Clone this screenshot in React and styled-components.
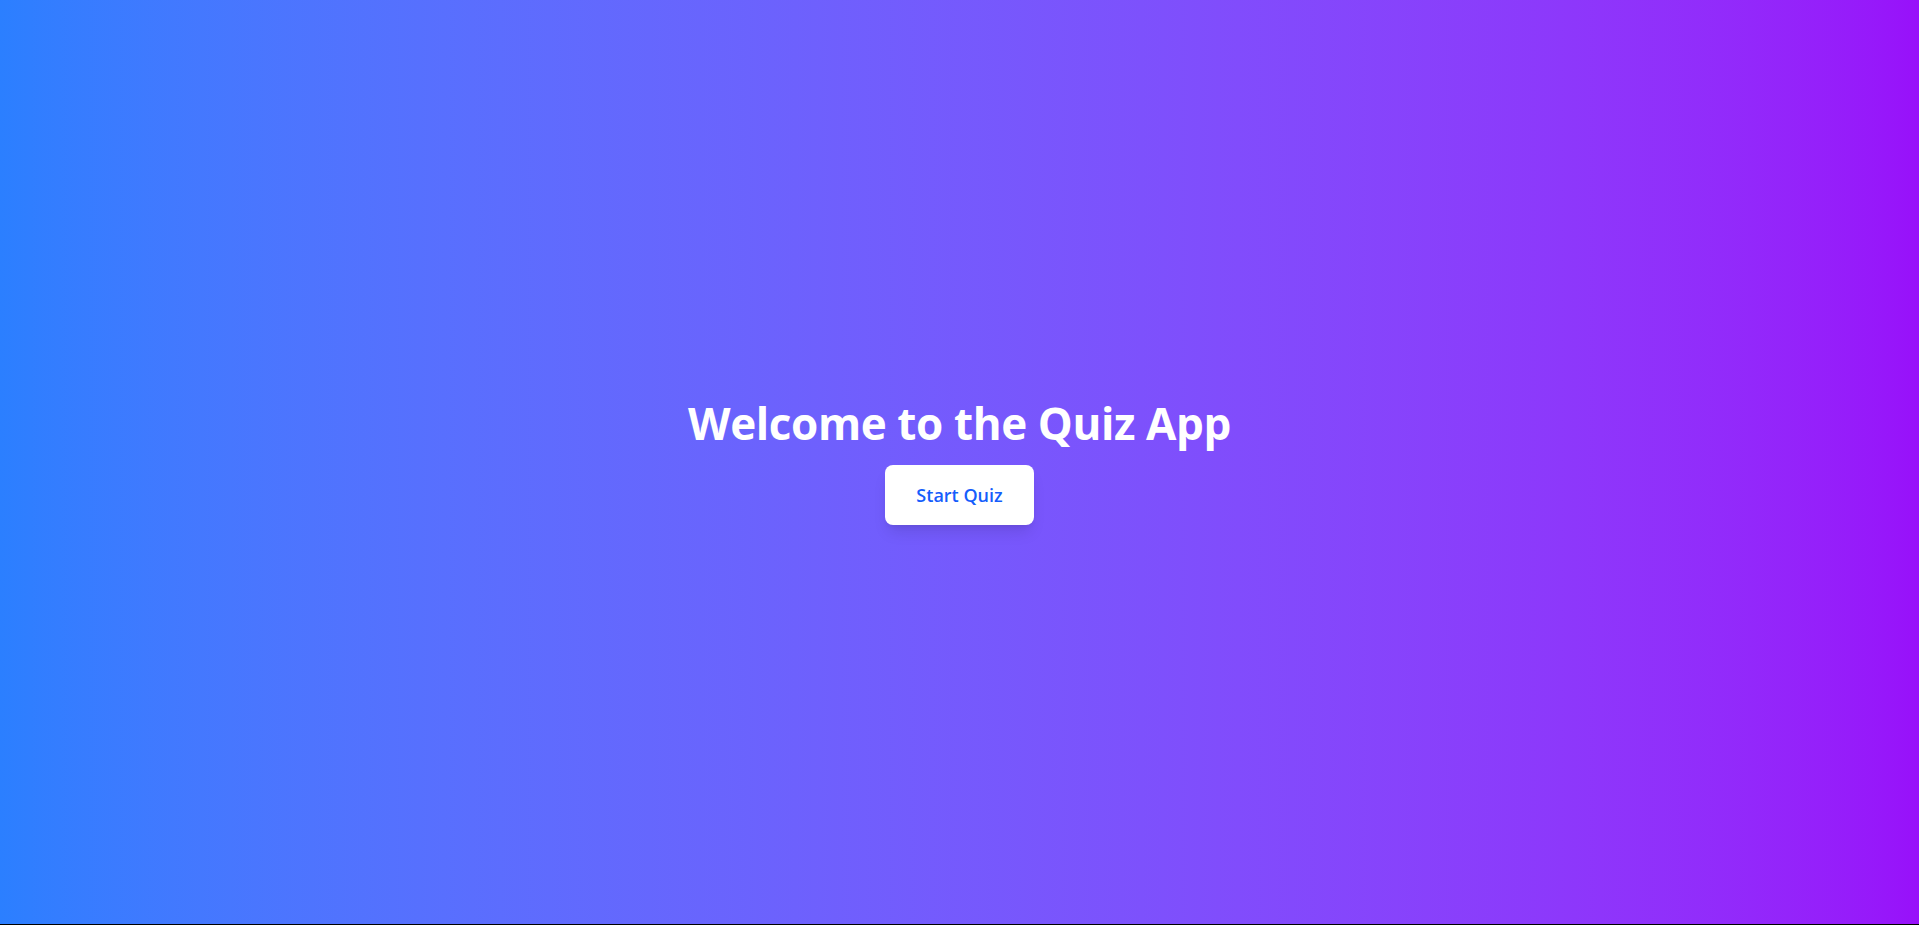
import React from 'react';
import styled, { createGlobalStyle } from 'styled-components';

const GlobalStyle = createGlobalStyle`
  html, body {
    margin: 0;
    padding: 0;
    background: #000;
  }
  body {
    font-family: "Open Sans", "Noto Sans", "Liberation Sans", sans-serif;
  }
`;

const Screen = styled.div`
  height: 924px;
  width: 100%;
  display: flex;
  flex-direction: column;
  align-items: center;
  justify-content: center;
  background: linear-gradient(to right in oklab, #2b7fff, #9810fa);
`;

const Title = styled.h1`
  margin: 0 0 18px;
  font-size: 44px;
  line-height: 48px;
  font-weight: 700;
  color: #fff;
  letter-spacing: -0.4px;
`;

const StartButton = styled.button`
  height: 60px;
  padding: 0 31px;
  border: none;
  border-radius: 8px;
  background: #fff;
  color: #155dfc;
  font-family: inherit;
  font-size: 18px;
  font-weight: 600;
  cursor: pointer;
  box-shadow: 0 10px 15px -3px rgba(0, 0, 0, 0.1), 0 4px 6px -4px rgba(0, 0, 0, 0.1);
`;

export default function App() {
  return (
    <>
      <GlobalStyle />
      <Screen>
        <Title>Welcome to the Quiz App</Title>
        <StartButton>Start Quiz</StartButton>
      </Screen>
    </>
  );
}
